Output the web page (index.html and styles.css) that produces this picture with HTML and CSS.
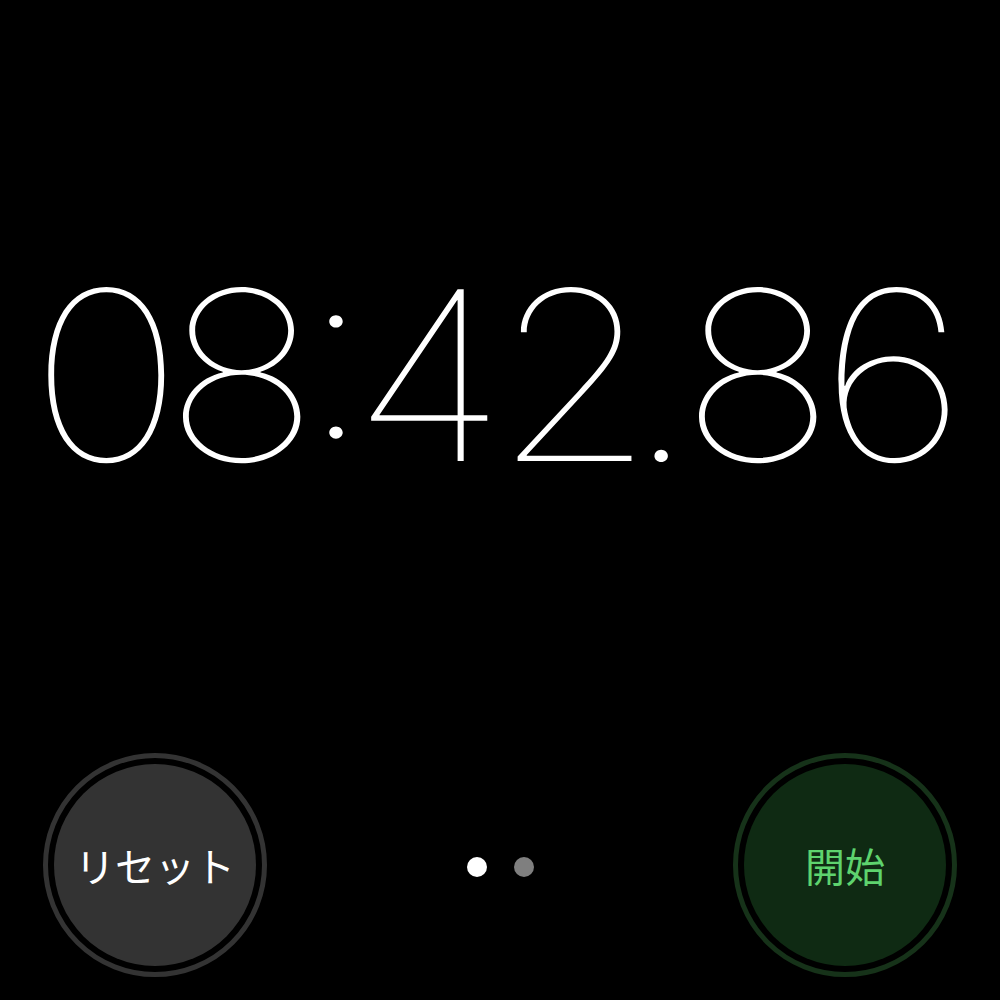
FILE: index.html
```html
<!DOCTYPE html>
<html lang="ja">
<head>
<meta charset="utf-8">
<link rel="stylesheet" href="styles.css">
</head>
<body>
<div class="screen">
  <div class="time-wrap">
    <div class="time">08<span class="colon">:</span><span class="four">4</span>2<span class="period">.</span>86</div>
  </div>
  <div class="controls">
    <div class="btn btn-reset"><div class="btn-inner">リセット</div></div>
    <div class="dots"><span class="dot active"></span><span class="dot"></span></div>
    <div class="btn btn-start"><div class="btn-inner">開始</div></div>
  </div>
</div>
</body>
</html>
```
FILE: styles.css
```css
html, body {
  margin: 0;
  padding: 0;
  background: #000;
}
.screen {
  width: 1000px;
  height: 1000px;
  display: flex;
  flex-direction: column;
  background: #000;
  color: #fff;
  font-family: "Noto Sans CJK JP", "Noto Sans", sans-serif;
}
.time-wrap {
  margin-top: 250px;
  height: 250px;
  display: flex;
  justify-content: center;
}
.time {
  font-family: "Inter", sans-serif;
  font-weight: 100;
  font-size: 236px;
  line-height: 250px;
  font-variant-numeric: tabular-nums;
  letter-spacing: -29px;
  white-space: nowrap;
  transform: scaleX(1.1);
  transform-origin: center;
  padding-right: 30px;
}
.colon {
  margin: 0 6px 0 7px;
  font-feature-settings: "case" 1, "tnum" 1;
}
.four {
  margin-right: 9px;
}
.period {
  margin: 0 9px 0 0;
}
.controls {
  margin-top: 253px;
  padding: 0 43px;
  display: flex;
  align-items: center;
  justify-content: space-between;
}
.btn {
  width: 224px;
  height: 224px;
  border-radius: 50%;
  box-sizing: border-box;
  border: 5px solid;
  padding: 6px;
  display: flex;
}
.btn-inner {
  flex: 1;
  border-radius: 50%;
  display: flex;
  align-items: center;
  justify-content: center;
  font-size: 40px;
}
.btn-reset { border-color: #333; }
.btn-reset .btn-inner { background: #333; color: #fff; }
.btn-start { border-color: #163219; }
.btn-start .btn-inner { background: #0f2a13; color: #5ed36e; }
.dots {
  display: flex;
  gap: 27px;
  padding-top: 4px;
}
.dot {
  width: 20px;
  height: 20px;
  border-radius: 50%;
  background: #7f7f7f;
}
.dot.active { background: #fff; }
```
